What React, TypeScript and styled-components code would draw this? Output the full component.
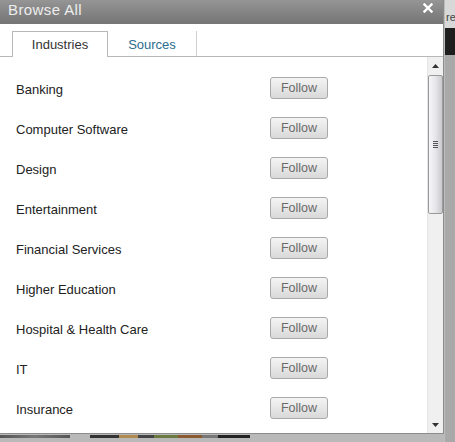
import styled, { createGlobalStyle } from "styled-components";

const GlobalStyle = createGlobalStyle`
	html, body {
		margin: 0;
		padding: 0;
		background: #ababab;
	}
	body {
		font-family: Arial, "Liberation Sans", sans-serif;
	}
`;

const industries = [
	"Banking",
	"Computer Software",
	"Design",
	"Entertainment",
	"Financial Services",
	"Higher Education",
	"Hospital & Health Care",
	"IT",
	"Insurance",
];

export default function App() {
	return (
		<>
			<GlobalStyle />
			<Page>
				<Dialog>
					<TitleBar>
						<Title>Browse All</Title>
						<CloseButton aria-label="close">
							<svg width="10" height="10" viewBox="0 0 10 10">
								<path d="M1.5 1.5 L8.5 8.5 M8.5 1.5 L1.5 8.5" stroke="#fff" strokeWidth="2.4" strokeLinecap="square" />
							</svg>
						</CloseButton>
					</TitleBar>
					<TabBar>
						<Tab $active>Industries</Tab>
						<Tab>Sources</Tab>
					</TabBar>
					<Body>
						<List>
							{industries.map((name) => (
								<Row key={name}>
									<Label>{name}</Label>
									<FollowButton>Follow</FollowButton>
								</Row>
							))}
						</List>
						<ScrollBar>
							<ArrowButton>
								<svg width="7" height="4" viewBox="0 0 7 4">
									<path d="M3.5 0 L7 4 L0 4 Z" fill="#333" />
								</svg>
							</ArrowButton>
							<Thumb>
								<Grip>
									<span />
									<span />
									<span />
									<span />
								</Grip>
							</Thumb>
							<Track />
							<ArrowButton>
								<svg width="7" height="4" viewBox="0 0 7 4">
									<path d="M0 0 L7 0 L3.5 4 Z" fill="#333" />
								</svg>
							</ArrowButton>
						</ScrollBar>
					</Body>
				</Dialog>
				<RightStrip>
					<PageText>re</PageText>
					<DarkBand />
					<GreyFill />
				</RightStrip>
				<BottomStrip>
					<Thumbs $w={70} />
					<Thumbs $w={160} $ml={20} $colored />
				</BottomStrip>
			</Page>
		</>
	);
}

const Page = styled.div`
	width: 455px;
	height: 442px;
	overflow: hidden;
	display: grid;
	grid-template-columns: 444px 11px;
	grid-template-rows: 434px 8px;
`;

const Dialog = styled.div`
	grid-column: 1;
	grid-row: 1;
	display: flex;
	flex-direction: column;
	background: #fff;
	border-right: 1px solid #8c8c8c;
	border-bottom: 1px solid #8c8c8c;
	box-sizing: border-box;
`;

const TitleBar = styled.div`
	height: 24px;
	flex: none;
	display: flex;
	align-items: center;
	justify-content: space-between;
	padding: 0 10px 0 8px;
	background: linear-gradient(#959595, #747474);
	box-sizing: border-box;
`;

const Title = styled.div`
	color: #ededed;
	font-size: 15px;
	letter-spacing: 0.4px;
	margin-top: -6px;
`;

const CloseButton = styled.div`
	display: flex;
	margin-top: -8px;
`;

const TabBar = styled.div`
	height: 33px;
	flex: none;
	display: flex;
	align-items: flex-end;
	padding-left: 12px;
	border-bottom: 1px solid #b8b8b8;
	box-sizing: border-box;
`;

const Tab = styled.div<{ $active?: boolean }>`
	box-sizing: border-box;
	display: flex;
	align-items: center;
	justify-content: center;
	font-size: 13px;
	width: ${(p) => (p.$active ? "96px" : "89px")};
	height: ${(p) => (p.$active ? "26px" : "25px")};
	margin-bottom: ${(p) => (p.$active ? "-1px" : "0")};
	background: #fff;
	color: ${(p) => (p.$active ? "#333" : "#2b6d8e")};
	border: ${(p) => (p.$active ? "1px solid #b8b8b8" : "none")};
	border-bottom: none;
	border-right: 1px solid ${(p) => (p.$active ? "#b8b8b8" : "#d0d0d0")};
	padding-top: ${(p) => (p.$active ? "0" : "1px")};
`;

const Body = styled.div`
	flex: 1;
	display: flex;
	min-height: 0;
`;

const List = styled.div`
	flex: 1;
	padding-top: 12px;
`;

const Row = styled.div`
	height: 40px;
	display: flex;
	align-items: center;
	padding-left: 16px;
`;

const Label = styled.div`
	width: 254px;
	font-size: 13px;
	color: #222;
`;

const FollowButton = styled.div`
	box-sizing: border-box;
	width: 58px;
	height: 22px;
	margin-top: -2px;
	display: flex;
	align-items: center;
	justify-content: center;
	font-size: 12.5px;
	color: #6a6a6a;
	border: 1px solid #a9a9a9;
	border-radius: 3px;
	background: linear-gradient(#f4f4f4, #d9d9d9);
`;

const ScrollBar = styled.div`
	width: 15px;
	display: flex;
	flex-direction: column;
	background: #f0f0f0;
	border-left: 1px solid #e4e4e4;
`;

const ArrowButton = styled.div`
	height: 17px;
	flex: none;
	display: flex;
	align-items: center;
	justify-content: center;
`;

const Thumb = styled.div`
	height: 139px;
	flex: none;
	margin: 1px 0 0 0;
	box-sizing: border-box;
	border: 1px solid #9a9a9a;
	border-radius: 2px;
	background: linear-gradient(90deg, #f6f6f8 0%, #e6e6ea 50%, #c9c9ce 100%);
	display: flex;
	align-items: center;
	justify-content: center;
`;

const Grip = styled.div`
	display: flex;
	flex-direction: column;
	gap: 1px;
	span {
		display: block;
		width: 5px;
		height: 1px;
		background: #555;
	}
`;

const Track = styled.div`
	flex: 1;
`;

const RightStrip = styled.div`
	grid-column: 2;
	grid-row: 1 / span 2;
	display: flex;
	flex-direction: column;
	border-left: 1px solid #bcbcbc;
`;

const PageText = styled.div`
	height: 28px;
	flex: none;
	background: #d8d8d8;
	color: #444;
	font-size: 11px;
	padding: 11px 0 0 1px;
	box-sizing: border-box;
`;

const DarkBand = styled.div`
	height: 27px;
	flex: none;
	background: #1e1e1e;
`;

const GreyFill = styled.div`
	flex: 1;
	background: #a9a9a9;
`;

const BottomStrip = styled.div`
	grid-column: 1;
	grid-row: 2;
	background: #b9b9b9;
	display: flex;
	align-items: flex-start;
	padding-top: 1px;
`;

const Thumbs = styled.div<{ $w: number; $ml?: number; $colored?: boolean }>`
	width: ${(p) => p.$w}px;
	margin-left: ${(p) => p.$ml ?? 0}px;
	height: 3px;
	background: ${(p) =>
		p.$colored
			? "linear-gradient(90deg, #333 0 18%, #b08a50 18% 30%, #444 30% 40%, #6a7a40 40% 55%, #8a5a30 55% 70%, #777 70% 80%, #222 80% 100%)"
			: "linear-gradient(90deg, #555, #777, #555)"};
`;
